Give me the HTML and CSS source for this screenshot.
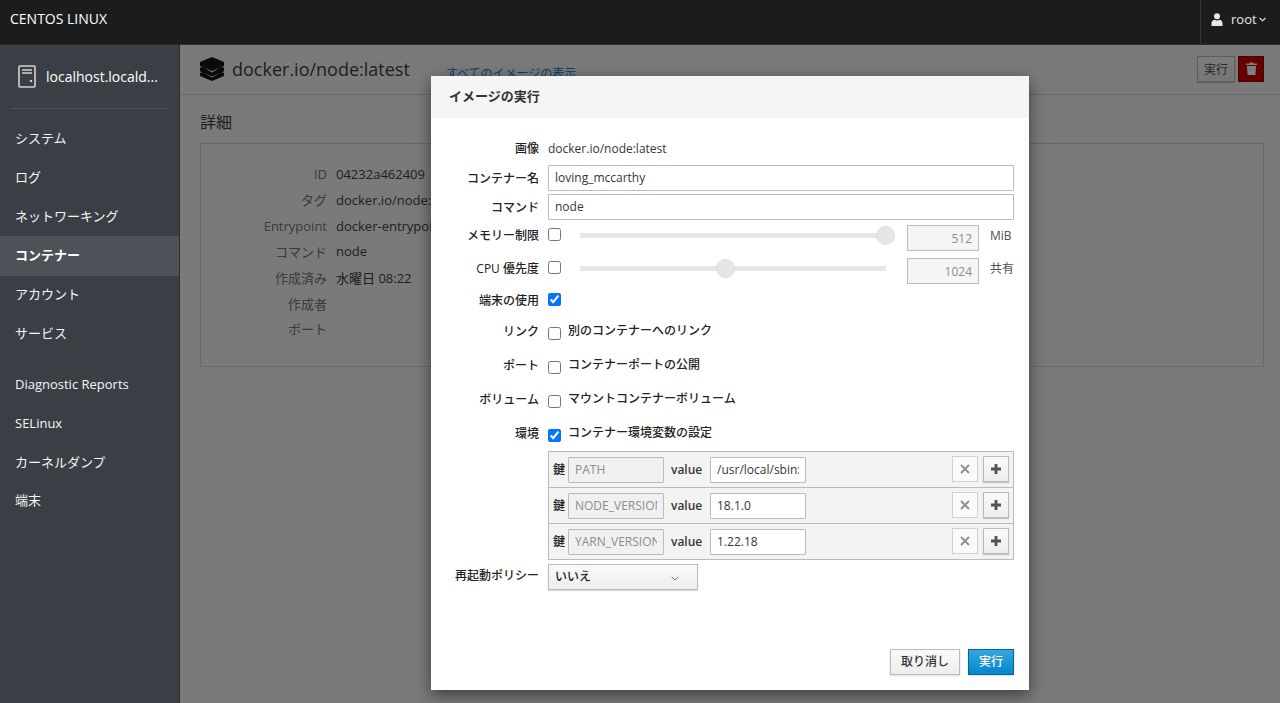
FILE: index.html
```html
<!DOCTYPE html>
<html lang="ja">
<head>
<meta charset="utf-8">
<title>イメージの実行</title>
<link rel="stylesheet" href="styles.css">
</head>
<body>
<header class="topbar">
  <div class="brand">CENTOS LINUX</div>
  <div class="user">
    <svg class="user-icon" viewBox="0 0 12 13"><circle cx="6" cy="3.2" r="3"/><path d="M0.5 13V10.2C0.5 8 2.2 7 3.6 6.8C4.3 7.2 5.1 7.4 6 7.4S7.7 7.2 8.4 6.8C9.8 7 11.5 8 11.5 10.2V13Z"/></svg>
    <span>root</span>
    <svg class="user-caret" viewBox="0 0 8 5"><path d="M0.7 0.8L4 4L7.3 0.8"/></svg>
  </div>
</header>
<div class="shell">
  <nav class="sidebar">
    <div class="host">
      <svg class="host-icon" viewBox="0 0 18 23"><rect x="1" y="1" width="16" height="21" rx="1"/><path d="M4 5H14M4 8H14"/><circle cx="13" cy="16" r="1.2"/></svg>
      <span class="host-name">localhost.locald...</span>
    </div>
    <ul class="nav-group">
      <li>システム</li>
      <li>ログ</li>
      <li>ネットワーキング</li>
      <li class="active">コンテナー</li>
      <li>アカウント</li>
      <li>サービス</li>
    </ul>
    <ul class="nav-group second">
      <li>Diagnostic Reports</li>
      <li>SELinux</li>
      <li>カーネルダンプ</li>
      <li>端末</li>
    </ul>
  </nav>
  <main class="content">
    <div class="page-head">
      <svg class="layers" viewBox="0 0 24 24"><path d="M12 0L24 5V9L12 14L0 9V5Z"/><path d="M0 10.8L2.6 9.8L12 15.4L21.4 9.8L24 10.8V14.2L12 19.6L0 14.2Z"/><path d="M0 16L2.6 15L12 20.6L21.4 15L24 16V19L12 24L0 19Z"/></svg>
      <h1>docker.io/node:latest</h1>
      <a class="all-link">すべてのイメージの表示</a>
      <div class="head-actions">
        <button class="btn-run-small">実行</button>
        <button class="btn-trash" aria-label="削除">
          <svg viewBox="0 0 12 14"><path d="M4 1.5V0.5H8V1.5H12V3.2H0V1.5Z"/><path d="M1 4.2H11L10.2 14H1.8Z"/></svg>
        </button>
      </div>
    </div>
    <h2 class="section-title">詳細</h2>
    <section class="details">
      <dl class="info">
        <dt>ID</dt><dd>04232a462409</dd>
        <dt>タグ</dt><dd>docker.io/node:latest</dd>
        <dt>Entrypoint</dt><dd>docker-entrypoint.sh</dd>
        <dt>コマンド</dt><dd>node</dd>
        <dt>作成済み</dt><dd>水曜日 08:22</dd>
        <dt>作成者</dt><dd></dd>
        <dt>ポート</dt><dd></dd>
      </dl>
    </section>
    <div class="backdrop"></div>
    <div class="modal">
      <div class="modal-head">イメージの実行</div>
      <form class="modal-body">
        <div class="row r-image"><label>画像</label><span class="plain">docker.io/node:latest</span></div>
        <div class="row r-name"><label>コンテナー名</label><input class="text" value="loving_mccarthy"></div>
        <div class="row r-cmd"><label>コマンド</label><input class="text" value="node"></div>
        <div class="row r-mem"><label>メモリー制限</label><input type="checkbox" class="check">
          <div class="slider"><span class="thumb thumb-end"></span></div>
          <input class="num" value="512" disabled><span class="unit">MiB</span></div>
        <div class="row r-cpu"><label>CPU 優先度</label><input type="checkbox" class="check">
          <div class="slider"><span class="thumb thumb-mid"></span></div>
          <input class="num" value="1024" disabled><span class="unit">共有</span></div>
        <div class="row r-tty"><label>端末の使用</label><input type="checkbox" class="check" checked></div>
        <div class="row r-opt"><label>リンク</label><input type="checkbox" class="check low"><span class="opt-text">別のコンテナーへのリンク</span></div>
        <div class="row r-opt"><label>ポート</label><input type="checkbox" class="check low"><span class="opt-text">コンテナーポートの公開</span></div>
        <div class="row r-opt"><label>ボリューム</label><input type="checkbox" class="check low"><span class="opt-text">マウントコンテナーボリューム</span></div>
        <div class="row r-opt"><label>環境</label><input type="checkbox" class="check low" checked><span class="opt-text">コンテナー環境変数の設定</span></div>
        <div class="env">
          <div class="env-row"><span class="k">鍵</span><input class="env-in" value="PATH" disabled><span class="v">value</span><input class="env-in val" value="/usr/local/sbin:/usr/local/bin:"><button type="button" class="sq x" aria-label="削除"><svg viewBox="0 0 10 10"><path d="M1 1L9 9M9 1L1 9"/></svg></button><button type="button" class="sq plus" aria-label="追加"><svg viewBox="0 0 10 10"><path d="M5 0V10M0 5H10"/></svg></button></div>
          <div class="env-row"><span class="k">鍵</span><input class="env-in" value="NODE_VERSION" disabled><span class="v">value</span><input class="env-in val" value="18.1.0"><button type="button" class="sq x" aria-label="削除"><svg viewBox="0 0 10 10"><path d="M1 1L9 9M9 1L1 9"/></svg></button><button type="button" class="sq plus" aria-label="追加"><svg viewBox="0 0 10 10"><path d="M5 0V10M0 5H10"/></svg></button></div>
          <div class="env-row"><span class="k">鍵</span><input class="env-in" value="YARN_VERSION" disabled><span class="v">value</span><input class="env-in val" value="1.22.18"><button type="button" class="sq x" aria-label="削除"><svg viewBox="0 0 10 10"><path d="M1 1L9 9M9 1L1 9"/></svg></button><button type="button" class="sq plus" aria-label="追加"><svg viewBox="0 0 10 10"><path d="M5 0V10M0 5H10"/></svg></button></div>
        </div>
        <div class="row r-restart"><label>再起動ポリシー</label>
          <div class="select"><span>いいえ</span><svg viewBox="0 0 8 5"><path d="M0.7 0.8L4 4L7.3 0.8"/></svg></div></div>
      </form>
      <div class="modal-foot">
        <button class="btn-cancel">取り消し</button>
        <button class="btn-primary">実行</button>
      </div>
    </div>
  </main>
</div>
</body>
</html>
```
FILE: styles.css
```css
* { box-sizing: border-box; }
html, body { height: 100%; }
body {
  margin: 0;
  overflow: hidden;
  font-family: "Open Sans", "Noto Sans CJK JP", sans-serif;
  font-size: 12px;
  color: #151515;
  display: flex;
  flex-direction: column;
  background: #f5f5f5;
}
button, input { font-family: inherit; }

.topbar {
  height: 45px;
  flex: none;
  background: #1c1c1c;
  border-bottom: 1px solid #2b2b2b;
  color: #fff;
  display: flex;
  justify-content: space-between;
  align-items: stretch;
}
.brand { font-size: 14px; line-height: 38px; padding-left: 10px; }
.user {
  width: 80px;
  border-left: 1px solid #333;
  display: flex;
  align-items: center;
  padding: 0 0 6px 10px;
  font-size: 13px;
  color: #e8e8e8;
}
.user-icon { width: 12px; height: 13px; fill: #e8e8e8; margin-right: 8px; }
.user-caret { width: 7px; height: 5px; margin-left: 2px; fill: none; stroke: #e8e8e8; stroke-width: 1.3; }

.shell { flex: 1; display: flex; min-height: 0; }

.sidebar {
  width: 180px;
  flex: none;
  background: #393f44;
  border-right: 1px solid #292e34;
  color: #f5f5f5;
  font-size: 13px;
}
.host {
  height: 64px;
  margin: 0 10px;
  border-bottom: 1px solid #4d5258;
  display: flex;
  align-items: center;
  padding: 0 0 1px 8px;
  font-size: 14px;
  color: #fff;
}
.host-icon { width: 18px; height: 23px; margin-right: 10px; fill: none; stroke: #d1d1d1; stroke-width: 1.6; }
.host-icon circle { fill: #d1d1d1; stroke: none; }
.host-name { white-space: nowrap; }
.nav-group { list-style: none; margin: 10px 0 0; padding: 0; }
.nav-group li { height: 39px; line-height: 39px; padding-left: 15px; }
.nav-group li.active { background: #4d5258; font-weight: 700; color: #fff; height: 40px; margin-bottom: -1px; }
.nav-group.second { margin-top: 12px; }
.nav-group.second li { height: 38.8px; }

.content { flex: 1; min-width: 0; position: relative; background: #f5f5f5; }
.page-head {
  height: 50px;
  border-bottom: 1px solid #d1d1d1;
  display: flex;
  align-items: center;
  padding: 0 16px 2px 20px;
}
.layers { width: 24px; height: 24px; fill: #151515; margin-right: 8px; }
h1 { margin: 0; font-size: 18px; font-weight: 400; color: #393f44; }
.all-link { margin-left: 36px; margin-top: 8px; color: #0088ce; font-size: 12px; }
.head-actions { margin-left: auto; display: flex; gap: 3px; }
.btn-run-small {
  width: 38px; height: 26px; padding: 0;
  border: 1px solid #bbb; background: linear-gradient(#fafafa, #ededed);
  box-shadow: 0 1px 1px rgba(3, 3, 3, 0.2);
  font-size: 12px; color: #4d5258;
}
.btn-trash { width: 26px; height: 26px; padding: 0; border: 1px solid #a30000; background: #cc0000; display: flex; align-items: center; justify-content: center; }
.btn-trash svg { width: 11px; height: 13px; fill: #fff; }
.section-title { margin: 16px 0 0 20px; font-size: 16px; line-height: 22px; font-weight: 400; color: #393f44; }
.details {
  margin: 10px 16px 0 20px;
  height: 224px;
  border: 1px solid #d1d1d1;
  padding: 17px 0 0;
}
.info { margin: 0; display: grid; grid-template-columns: 126px 1fr; grid-auto-rows: 25.85px; column-gap: 9px; font-size: 13px; align-items: center; }
.info dt { text-align: right; color: #72767b; }
.info dd { margin: 0; color: #393f44; }

.backdrop { position: absolute; inset: 0; background: rgba(0, 0, 0, 0.5); }
.modal {
  position: absolute;
  left: 251px;
  top: 31px;
  width: 598px;
  height: 614px;
  background: #fff;
  box-shadow: 0 5px 15px rgba(0, 0, 0, 0.5);
  display: flex;
  flex-direction: column;
}
.modal-head {
  height: 42px;
  flex: none;
  background: #f5f5f5;
  line-height: 41px;
  padding-left: 18px;
  font-size: 13px;
  font-weight: 600;
  color: #333;
}
.modal-body { flex: 1; padding: 17px 15px 0; display: flex; flex-direction: column; }
.row { display: flex; align-items: center; height: 26px; }
.row label { width: 93px; flex: none; margin-right: 9px; text-align: right; font-weight: 500; color: #222; white-space: nowrap; }
.r-name { margin-top: 4px; }
.r-cmd { margin-top: 3px; }
.r-mem { margin-top: 5px; }
.r-cpu { margin-top: 7px; }
.r-tty { margin-top: 3px; }
.r-opt { margin-top: 8px; }
.r-tty + .r-opt { margin-top: 4px; }
.r-restart { margin-top: 4px; }
.r-mem label, .r-cpu label { position: relative; top: -3px; }
.r-opt label { position: relative; top: 1px; }
.r-restart label { position: relative; top: -2px; }
.plain { color: #363636; }
.text {
  flex: 1; min-width: 0; height: 26px;
  border: 1px solid #bbb; padding: 0 6px 2px;
  font-size: 12px; color: #363636; outline: none;
  border-radius: 1px;
}
.check { margin: 0; width: 13px; height: 13px; flex: none; position: relative; top: -4px; }
.check.low { top: 3px; }
.r-tty .check { top: -1px; }
.slider { position: relative; width: 306px; height: 5px; margin: 0 21px 0 19px; background: #e6e6e6; top: -3px; flex: none; }
.thumb { position: absolute; top: -7px; width: 19px; height: 19px; border-radius: 50%; background: #e6e6e6; border: 1px solid #dcdcdc; }
.thumb-end { right: -9px; }
.thumb-mid { left: 136px; }
.num {
  width: 72px; height: 26px; flex: none;
  border: 1px solid #bbb; background: #f5f5f5; padding: 0 6px;
  text-align: right; font-size: 12px; color: #8b8d8f;
  -webkit-text-fill-color: #8b8d8f; opacity: 1; margin: 0;
}
.unit { margin-left: 11px; position: relative; top: -3px; color: #4d5258; white-space: nowrap; }
.opt-text { margin-left: 7px; font-weight: 500; color: #222; }

.env {
  margin: 6px 0 0 102px;
  border: 1px solid #bbb;
  background: #f3f3f3;
  height: 109px;
}
.env-row {
  height: 36px;
  display: flex;
  align-items: center;
  padding: 0 4px;
  border-bottom: 1px solid #bbb;
}
.env-row:last-child { border-bottom: 0; height: 35px; }
.k { width: 15px; font-weight: 500; color: #222; position: relative; top: -1px; }
.v { width: 39px; margin-left: 7px; font-weight: 600; color: #363636; }
.env-in {
  width: 96px; height: 26px; flex: none; border: 1px solid #bbb; padding: 0 6px 2px;
  font-size: 12px; color: #363636; background: #fff; margin: 1px 0 0; border-radius: 1px;
}
.env-in:disabled { background: #f1f1f1; color: #8b8d8f; -webkit-text-fill-color: #8b8d8f; opacity: 1; }
.sq {
  width: 26px; height: 26px; flex: none; padding: 0;
  border: 1px solid #bbb; background: linear-gradient(#fafafa, #ededed);
  display: flex; align-items: center; justify-content: center;
}
.sq svg { fill: none; stroke-linecap: butt; }
.x { margin-left: auto; background: #fafafa; border-color: #d1d1d1; margin-top: -1px; }
.x svg { width: 10px; height: 10px; stroke: #8b8d8f; stroke-width: 1.8; }
.plus { margin-left: 5px; box-shadow: 0 1px 1px rgba(3, 3, 3, 0.2); margin-top: -1px; }
.plus svg { width: 10px; height: 10px; stroke: #4d5258; stroke-width: 2.8; }

.select {
  width: 150px; height: 26px;
  border: 1px solid #bbb;
  background: linear-gradient(#fafafa, #ededed);
  box-shadow: 0 1px 1px rgba(3, 3, 3, 0.15);
  display: flex; align-items: center; justify-content: space-between;
  padding: 0 14px 2px 6px;
  font-weight: 500; font-size: 12px; color: #222;
}
.select svg { width: 8px; height: 5px; fill: none; stroke: #72767b; stroke-width: 1; position: relative; top: 2px; margin-right: 4px; }

.modal-foot { flex: none; display: flex; justify-content: flex-end; gap: 8px; padding: 0 15px 15px; }
.btn-cancel, .btn-primary { height: 26px; padding: 0 0 2px; font-size: 12px; font-weight: 500; box-shadow: 0 1px 2px rgba(3, 3, 3, 0.15); }
.btn-cancel { width: 70px; border: 1px solid #bbb; background: linear-gradient(#fafafa, #ededed); color: #333; }
.btn-primary { width: 46px; border: 1px solid #00659c; background: linear-gradient(#39a5dc, #0088ce); color: #fff; }
```
